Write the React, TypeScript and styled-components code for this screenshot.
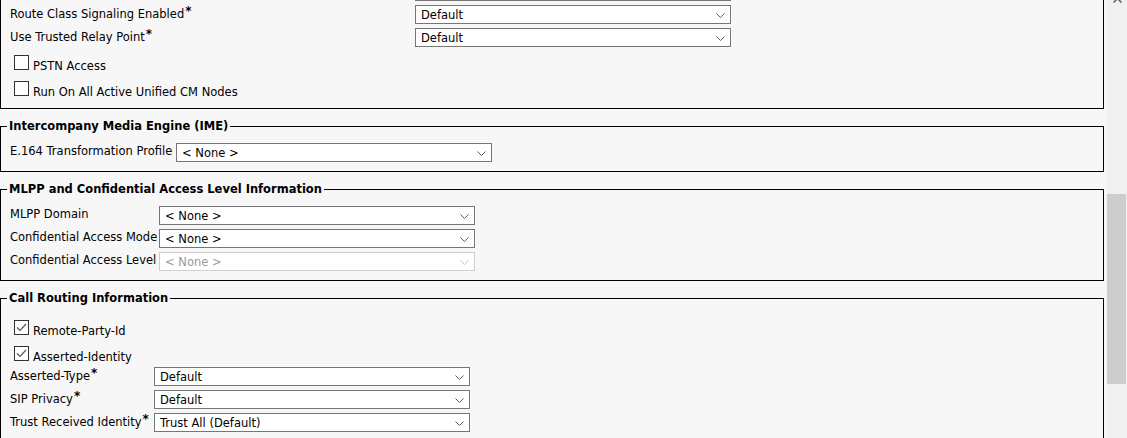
import styled, { createGlobalStyle } from 'styled-components'

const colors = {
  page: '#f7f7f7',
  text: '#000000',
  border: '#000000',
  selectBorder: '#767676',
  disabledBorder: '#cfcfcf',
  disabledText: '#9a9a9a',
  chevron: '#5a5a5a',
  track: '#f0f0f0',
  thumb: '#cdcdcd',
}

const GlobalStyle = createGlobalStyle`
  html, body {
    margin: 0;
    padding: 0;
    background: ${colors.page};
    overflow: hidden;
  }
  body {
    font-family: "DejaVu Sans", Verdana, sans-serif;
    font-size: 11.5px;
    color: ${colors.text};
  }
`

const Page = styled.div`
  display: flex;
  width: 1127px;
  height: 438px;
  overflow: hidden;
`

const Content = styled.div`
  flex: 1;
  min-width: 0;
  padding-right: 3px;
  overflow: hidden;
`

const Scrollbar = styled.div`
  width: 20px;
  background: ${colors.track};
  display: flex;
  flex-direction: column;
`

const ScrollArrow = styled.div`
  height: 3px;
  display: flex;
  justify-content: center;
  align-items: flex-end;
  overflow: hidden;
`

const ScrollThumb = styled.div`
  margin-top: 191px;
  width: 19px;
  height: 190px;
  background: ${colors.thumb};
`

const Section = styled.fieldset<{ $top?: number }>`
  margin: ${(p) => p.$top ?? 0}px 0 10px 0;
  padding: 0 6px 9px 6px;
  border: 1px solid ${colors.border};
  min-width: 0;
`

const SectionBottom = styled(Section)`
  padding-bottom: 7px;
`

const Legend = styled.legend`
  padding: 0 2px;
  font-weight: bold;
  line-height: 15px;
  white-space: nowrap;
`

const FieldGrid = styled.div<{ $label: number; $top?: number }>`
  display: grid;
  grid-template-columns: ${(p) => p.$label}px 316px;
  row-gap: 4px;
  padding-left: 3px;
  margin-top: ${(p) => p.$top ?? 0}px;
`

const FieldLabel = styled.div`
  align-self: start;
  line-height: 16px;
  white-space: nowrap;
`

const Req = styled.span`
  font-weight: bold;
  font-size: 12px;
  vertical-align: 3px;
  line-height: 1;
  margin-left: 1px;
`

const SelectBox = styled.div<{ $disabled?: boolean }>`
  height: 19px;
  box-sizing: border-box;
  display: flex;
  align-items: center;
  justify-content: space-between;
  padding: 1px 5px 0 5px;
  background: #ffffff;
  border: 1px solid ${(p) => (p.$disabled ? colors.disabledBorder : colors.selectBorder)};
  color: ${(p) => (p.$disabled ? colors.disabledText : colors.text)};
  white-space: nowrap;
`

const CheckRow = styled.div<{ $top?: number }>`
  display: flex;
  align-items: center;
  height: 26px;
  padding-left: 7px;
  margin-top: ${(p) => p.$top ?? 0}px;
`

const CheckBox = styled.span`
  width: 15px;
  height: 15px;
  box-sizing: border-box;
  border: 1px solid #333333;
  background: #ffffff;
  display: flex;
  align-items: center;
  justify-content: center;
  margin-right: 4px;
  flex-shrink: 0;
`

const CheckText = styled.span`
  padding-top: 8px;
  white-space: nowrap;
`

const Chevron = ({ color }: { color: string }) => (
  <svg width="9" height="5" viewBox="0 0 9 5">
    <polyline points="0.5,0.5 4.5,4.5 8.5,0.5" fill="none" stroke={color} strokeWidth="1" />
  </svg>
)

const Select = ({ value, disabled }: { value: string; disabled?: boolean }) => (
  <SelectBox $disabled={disabled}>
    <span>{value}</span>
    <Chevron color={disabled ? '#c4c4c4' : colors.chevron} />
  </SelectBox>
)

const Field = ({ label, required, value, disabled }: { label: string; required?: boolean; value: string; disabled?: boolean }) => (
  <>
    <FieldLabel>
      {label}
      {required && <Req>*</Req>}
    </FieldLabel>
    <Select value={value} disabled={disabled} />
  </>
)

const Check = ({ label, checked, top }: { label: string; checked?: boolean; top?: number }) => (
  <CheckRow $top={top}>
    <CheckBox>
      {checked && (
        <svg width="11" height="9" viewBox="0 0 11 9">
          <polyline points="1,4.5 4,7.5 10,1" fill="none" stroke="#555555" strokeWidth="1.2" />
        </svg>
      )}
    </CheckBox>
    <CheckText>{label}</CheckText>
  </CheckRow>
)

export default function App() {
  return (
    <>
      <GlobalStyle />
      <Page>
        <Content>
          <SectionBottom $top={-24}>
            <FieldGrid $label={405} $top={5}>
              <Field label="" value="" />
              <Field label="Route Class Signaling Enabled" required value="Default" />
              <Field label="Use Trusted Relay Point" required value="Default" />
            </FieldGrid>
            <Check label="PSTN Access" top={2} />
            <Check label="Run On All Active Unified CM Nodes" />
          </SectionBottom>

          <Section>
            <Legend>Intercompany Media Engine (IME)</Legend>
            <FieldGrid $label={166} $top={9}>
              <Field label="E.164 Transformation Profile" value="< None >" />
            </FieldGrid>
          </Section>

          <Section>
            <Legend>MLPP and Confidential Access Level Information</Legend>
            <FieldGrid $label={149} $top={9}>
              <Field label="MLPP Domain" value="< None >" />
              <Field label="Confidential Access Mode" value="< None >" />
              <Field label="Confidential Access Level" value="< None >" disabled />
            </FieldGrid>
          </Section>

          <Section>
            <Legend>Call Routing Information</Legend>
            <Check label="Remote-Party-Id" checked top={8} />
            <Check label="Asserted-Identity" checked />
            <FieldGrid $label={144} $top={1}>
              <Field label="Asserted-Type" required value="Default" />
              <Field label="SIP Privacy" required value="Default" />
              <Field label="Trust Received Identity" required value="Trust All (Default)" />
            </FieldGrid>
          </Section>
        </Content>
        <Scrollbar>
          <ScrollArrow>
            <svg width="9" height="6" viewBox="0 0 9 6">
              <polyline points="0.5,5.5 4.5,1.5 8.5,5.5" fill="none" stroke="#606060" strokeWidth="1.5" />
            </svg>
          </ScrollArrow>
          <ScrollThumb />
        </Scrollbar>
      </Page>
    </>
  )
}
